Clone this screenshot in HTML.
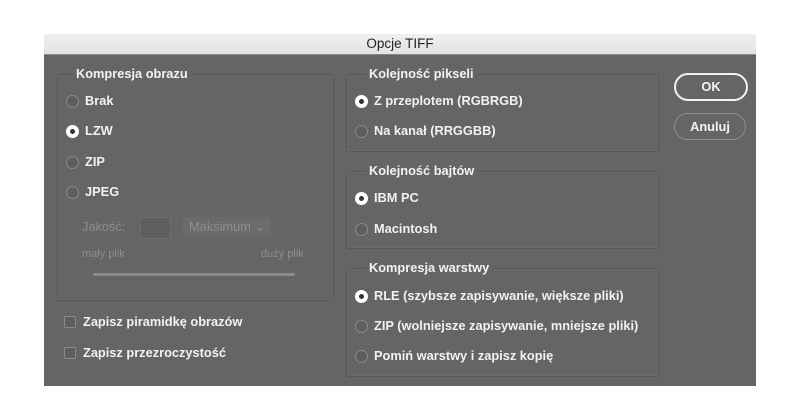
<!DOCTYPE html>
<html><head><meta charset="utf-8"><style>
body{margin:0;width:800px;height:420px;background:#fff;position:relative;overflow:hidden;font-family:"Liberation Sans",Arial,sans-serif;}
.dlg{position:absolute;left:44px;top:34px;width:712px;height:352px;background:#656565;}
.tb{position:absolute;left:44px;top:34px;width:712px;height:20px;background:linear-gradient(#f0f0f0,#e2e2e2);border-bottom:1px solid #888;text-align:center;font-size:13.5px;line-height:20px;color:#222;}
.g{position:absolute;border:1px solid #575757;border-radius:3px;box-shadow:inset 0 0 0 1px #6c6c6c;}
.gt{position:absolute;background:#656565;padding:0 4px;font-size:12.8px;font-weight:bold;color:#f2f2f2;top:-9px;line-height:16px;}
.t{position:absolute;font-size:12.8px;font-weight:bold;color:#f2f2f2;line-height:16px;white-space:nowrap;}
.r{position:absolute;width:11px;height:11px;border-radius:50%;border:1.5px solid #8a8a8a;background:#5e5e5e;}
.r.on{background:#fff;border-color:#fff;}
.r.on::after{content:"";position:absolute;left:3px;top:3px;width:5px;height:5px;border-radius:50%;background:#333;}
.cb{position:absolute;width:10px;height:10px;border:1.5px solid #8a8a8a;border-radius:2px;background:#5e5e5e;}
.btn{position:absolute;border-radius:15px;text-align:center;font-size:12.8px;font-weight:bold;color:#f2f2f2;}
.dim{position:absolute;color:#8e8e8e;font-size:12.8px;line-height:16px;}
</style></head><body>
<div class="dlg"></div>
<div class="tb">Opcje TIFF</div>

<div class="g" style="left:57px;top:74px;width:275px;height:225px;"><div class="gt" style="left:14px">Kompresja obrazu</div></div>
<div class="r" style="left:66px;top:95px"></div><div class="t" style="left:85px;top:93px">Brak</div>
<div class="r on" style="left:66px;top:125px"></div><div class="t" style="left:85px;top:123px">LZW</div>
<div class="r" style="left:66px;top:156px"></div><div class="t" style="left:85px;top:154px">ZIP</div>
<div class="r" style="left:66px;top:186px"></div><div class="t" style="left:85px;top:184px">JPEG</div>
<div class="dim" style="left:82px;top:219px">Jakość:</div>
<div style="position:absolute;left:140px;top:217px;width:29px;height:20px;background:#5f5f5f;border:1px solid #6e6e6e"></div>
<div style="position:absolute;left:183px;top:217px;width:88px;height:20px;background:#6b6b6b;border-radius:2px"></div>
<div class="dim" style="left:189px;top:219px">Maksimum ⌄</div>
<div class="dim" style="left:82px;top:246px;font-size:11px">mały plik</div>
<div class="dim" style="left:261px;top:246px;font-size:11px">duży plik</div>
<div style="position:absolute;left:93px;top:273px;width:202px;height:3px;background:#8a8a8a;border-radius:2px"></div>

<div class="cb" style="left:64px;top:316px"></div><div class="t" style="left:83px;top:314px">Zapisz piramidkę obrazów</div>
<div class="cb" style="left:64px;top:347px"></div><div class="t" style="left:83px;top:345px">Zapisz przezroczystość</div>

<div class="g" style="left:346px;top:74px;width:311px;height:76px;"><div class="gt" style="left:18px">Kolejność pikseli</div></div>
<div class="r on" style="left:355px;top:95px"></div><div class="t" style="left:374px;top:93px">Z przeplotem (RGBRGB)</div>
<div class="r" style="left:355px;top:125px"></div><div class="t" style="left:374px;top:123px">Na kanał (RRGGBB)</div>

<div class="g" style="left:346px;top:171px;width:311px;height:76px;"><div class="gt" style="left:18px">Kolejność bajtów</div></div>
<div class="r on" style="left:355px;top:192px"></div><div class="t" style="left:374px;top:190px">IBM PC</div>
<div class="r" style="left:355px;top:223px"></div><div class="t" style="left:374px;top:221px">Macintosh</div>

<div class="g" style="left:346px;top:268px;width:311px;height:107px;"><div class="gt" style="left:18px">Kompresja warstwy</div></div>
<div class="r on" style="left:355px;top:290px"></div><div class="t" style="left:374px;top:288px">RLE (szybsze zapisywanie, większe pliki)</div>
<div class="r" style="left:355px;top:320px"></div><div class="t" style="left:374px;top:318px">ZIP (wolniejsze zapisywanie, mniejsze pliki)</div>
<div class="r" style="left:355px;top:350px"></div><div class="t" style="left:374px;top:348px">Pomiń warstwy i zapisz kopię</div>

<div class="btn" style="left:674px;top:73px;width:70px;height:24px;line-height:24px;border:2px solid #f2f2f2">OK</div>
<div class="btn" style="left:674px;top:113px;width:70px;height:25px;line-height:25px;border:1.5px solid #8e8e8e">Anuluj</div>
</body></html>
